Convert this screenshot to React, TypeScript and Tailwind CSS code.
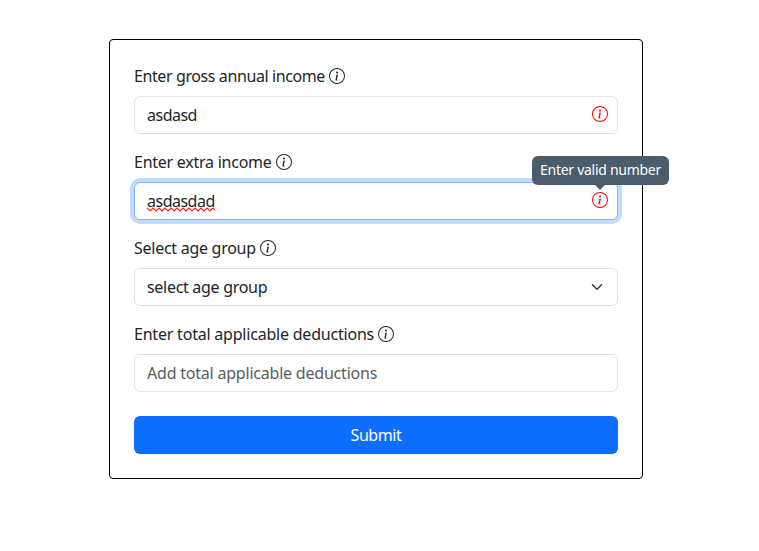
import type { ReactNode } from "react";
import { BsInfoCircle } from "react-icons/bs";

const control =
  "block h-[38px] w-full appearance-none rounded-md border border-[#dee2e6] bg-white px-3 py-1.5 text-base text-[#212529] outline-none placeholder:text-[#595c5f] placeholder:opacity-100";

function Field({ label, tracking, children }: { label: string; tracking: string; children: ReactNode }) {
  return (
    <div className="mb-4">
      <div className="mb-2 flex h-6 items-center whitespace-nowrap">
        <span className={tracking}>{label}</span>
        <BsInfoCircle className="ml-1 size-4" />
      </div>
      <div className="relative">{children}</div>
    </div>
  );
}

function ErrorIcon() {
  return <BsInfoCircle className="absolute top-2.5 right-2.5 size-4 text-[#ff0000]" />;
}

export default function App() {
  return (
    <div className="flex min-h-[551px] items-start bg-white pt-[39px] pl-[109px] font-['Noto_Sans',sans-serif] text-base text-[#212529]">
      <form className="h-[440px] w-[534px] rounded border border-black p-6">
        <Field label="Enter gross annual income" tracking="tracking-[-0.4px]">
          <input className={`${control} tracking-[-0.5px]`} defaultValue="asdasd" spellCheck={false} />
          <ErrorIcon />
        </Field>
        <Field label="Enter extra income" tracking="tracking-[-0.25px]">
          <input
            className="block h-[38px] w-full rounded-md border border-[#86b7fe] bg-white px-3 py-1.5 text-base tracking-[-0.5px] text-[#212529] shadow-[0_0_0_4px_#c2dbfe] outline-none"
            defaultValue="asdasdad"
            spellCheck={false}
          />
          <svg className="absolute top-[25px] left-[13px]" width="68" height="5" viewBox="0 0 68 5" fill="none">
            <path
              d="M0 1L3 4L6 1L9 4L12 1L15 4L18 1L21 4L24 1L27 4L30 1L33 4L36 1L39 4L42 1L45 4L48 1L51 4L54 1L57 4L60 1L63 4L66 1L68 3"
              stroke="#ff2020"
              strokeWidth="1.2"
            />
          </svg>
          <ErrorIcon />
          <div className="absolute -top-[26px] -right-[51px] flex h-[29px] w-[137px] items-center justify-center rounded-md bg-[#4b5c6b] pb-0.5 text-sm whitespace-nowrap text-white">
            <span className="tracking-[-0.28px]">Enter valid number</span>
            <span className="absolute top-full left-[63px] border-x-[5px] border-t-[5px] border-x-transparent border-t-[#4b5c6b]" />
          </div>
        </Field>
        <Field label="Select age group" tracking="tracking-[-0.27px]">
          <select className={`${control} tracking-[-0.3px]`} defaultValue="">
            <option value="">select age group</option>
          </select>
          <svg className="absolute top-[13px] right-[15px]" width="12" height="12" viewBox="0 0 16 16" fill="none">
            <path d="m2 5 6 6 6-6" stroke="#343a40" strokeWidth="2" strokeLinecap="round" strokeLinejoin="round" />
          </svg>
        </Field>
        <Field label="Enter total applicable deductions" tracking="tracking-[-0.21px]">
          <input className={`${control} tracking-[-0.21px]`} placeholder="Add total applicable deductions" />
        </Field>
        <button type="button" className="mt-6 block h-[38px] w-full rounded-md bg-[#0d6efd] text-white">
          <span className="tracking-[-0.4px]">Submit</span>
        </button>
      </form>
    </div>
  );
}
